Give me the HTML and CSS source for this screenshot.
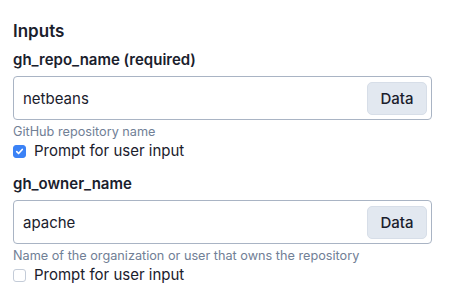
FILE: index.html
```html
<!DOCTYPE html>
<html>
<head>
<meta charset="utf-8">
<link rel="stylesheet" href="styles.css">
</head>
<body>
<div class="panel">
  <h2 class="title">Inputs</h2>
  <div class="field">
    <div class="label">gh_repo_name (required)</div>
    <div class="input">
      <span class="value">netbeans</span>
      <span class="btn">Data</span>
    </div>
    <div class="help">GitHub repository name</div>
    <label class="check"><span class="box checked"><svg viewBox="0 0 12 12" width="12" height="12"><path d="M3 6.2l2 2 4-4.4" fill="none" stroke="#fff" stroke-width="1.8" stroke-linecap="round" stroke-linejoin="round"/></svg></span>Prompt for user input</label>
  </div>
  <div class="field">
    <div class="label">gh_owner_name</div>
    <div class="input">
      <span class="value">apache</span>
      <span class="btn">Data</span>
    </div>
    <div class="help">Name of the organization or user that owns the repository</div>
    <label class="check"><span class="box"></span>Prompt for user input</label>
  </div>
</div>
</body>
</html>
```
FILE: styles.css
```css
* { box-sizing: border-box; }
html, body { margin: 0; background: #fff; }
body { font-family: Inter, "Noto Sans", sans-serif; color: #1a202c; }
.panel { padding: 19px 18px 0 13px; display: flex; flex-direction: column; }
.title { margin: 0 0 6px; font-size: 17px; font-weight: 600; line-height: 24px; color: #1a202c; }
.field { display: flex; flex-direction: column; margin-bottom: 11px; }
.label { font-size: 15px; font-weight: 600; line-height: 22px; margin-bottom: 5px; color: #1a202c; }
.input { height: 44px; border: 1px solid #a9b4c4; border-radius: 4px; display: flex; align-items: center; justify-content: space-between; padding: 0 4px 0 9px; }
.value { font-size: 15px; color: #1a202c; }
.btn { width: 60px; height: 33px; background: #e2e8f0; border: 1px solid #d7dee8; border-radius: 5px; display: flex; align-items: center; justify-content: center; font-size: 15px; font-weight: 500; color: #1a202c; }
.help { font-size: 12.7px; color: #718096; line-height: 16px; margin-top: 4px; }
.check { display: flex; align-items: center; font-size: 15px; line-height: 22px; color: #1a202c; }
.box { width: 13px; height: 13px; border: 1px solid #c4ccd8; border-radius: 3px; margin-right: 8px; display: flex; align-items: center; justify-content: center; }
.box.checked { background: #3b82f6; border-color: #3b82f6; }
.box svg { width: 11px; height: 11px; }
```
